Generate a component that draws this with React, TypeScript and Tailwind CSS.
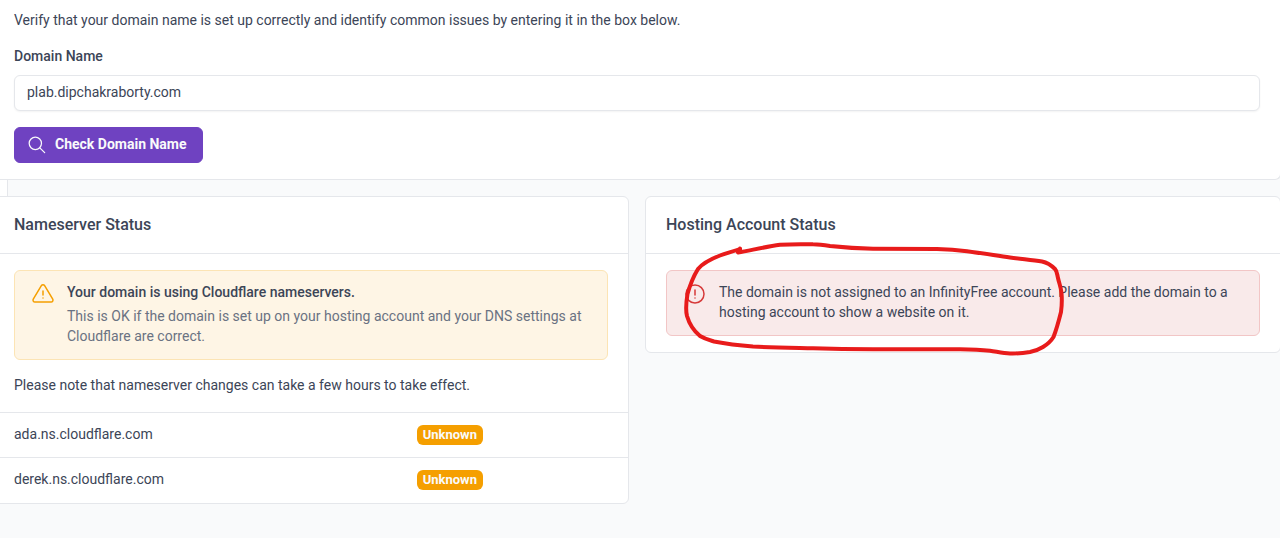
import type { ReactNode } from 'react';

const card = 'relative rounded-md border border-gray-200 bg-white';

function SearchIcon() {
  return (
    <svg viewBox="0 0 24 24" className="size-5" fill="none" stroke="currentColor" strokeWidth="1.5" strokeLinecap="round" aria-hidden="true">
      <circle cx="10" cy="10" r="7.4" />
      <path d="M21.2 21.2l-5.8-5.8" />
    </svg>
  );
}

function WarningIcon() {
  return (
    <svg viewBox="0 0 24 24" className="-mb-1 size-6 shrink-0 text-[#f59f00]" fill="none" stroke="currentColor" strokeWidth="1.5" strokeLinecap="round" strokeLinejoin="round" aria-hidden="true">
      <path d="M10.363 3.591l-8.106 13.534a1.914 1.914 0 0 0 1.636 2.871h16.214a1.914 1.914 0 0 0 1.636-2.87l-8.106-13.536a1.914 1.914 0 0 0-3.274 0z" />
      <path d="M12 9v4M12 16h.01" />
    </svg>
  );
}

function ErrorIcon() {
  return (
    <svg viewBox="0 0 24 24" className="-mb-1 size-6 shrink-0 text-[#d63939]" fill="none" stroke="currentColor" strokeWidth="1.5" strokeLinecap="round" aria-hidden="true">
      <circle cx="12" cy="12" r="9" />
      <path d="M12 8v5M12 16h.01" />
    </svg>
  );
}

function Scribble() {
  return (
    <svg
      viewBox="678 241 392 120"
      className="pointer-events-none absolute top-11 left-8 h-[120px] w-[392px]"
      fill="none"
      stroke="#e81b1b"
      strokeWidth="4"
      strokeLinecap="round"
      strokeLinejoin="round"
      aria-hidden="true"
    >
      <path d="M740 249C732 252 726 253 720 255.500C711 259 703 263 698 269C693 277 690 285 687.500 294C686 303 686 312 687 316C689 323 694 331 700 336C705 339 709 340 714 341.500C727 344 740 345.500 753 346.500C773 347.500 793 347.800 813 348.300C833 349 853 349.300 873 349.300H960C971 349.500 980 349.800 990 350.700C997 351.700 1003 353.200 1010 353.500C1017 353.700 1024 353 1030 352C1035 351 1039 349.500 1043 347C1048 344 1051 341 1053.500 337C1057 328 1059 320 1061 312C1062 305 1062 299 1061.500 293C1061 287 1059 283 1058 278C1057 274 1057 271 1055 269C1051 265 1047 262.500 1042 261.500C1032 260 1021 259 1010 257.500C996 255.500 981 253 967 251.200C957 250 947 249.300 937 249L873 248.700C859 248.500 844 247.500 830 246C824 245 819 244.300 813 244.300C802 244 791 244 780 244.800C765 247 752 250 738 252.500L740 248.500" />
    </svg>
  );
}

function CardTitle({ children }: { children: ReactNode }) {
  return (
    <header className="border-b border-gray-200 px-5 py-4">
      <h2 className="text-base font-medium">{children}</h2>
    </header>
  );
}

const nameservers = ['ada.ns.cloudflare.com', 'derek.ns.cloudflare.com'];

export default function App() {
  return (
    <div className="min-h-screen overflow-hidden bg-gray-50 font-['Roboto','Liberation_Sans',sans-serif] text-sm text-[#3c4557]">
      <main className="-mr-px -ml-[7px]">
        <section className="rounded-b-md border border-t-0 border-gray-200 bg-white px-5 pt-2.5 pb-4">
          <p>Verify that your domain name is set up correctly and identify common issues by entering it in the box below.</p>
          <form onSubmit={(e) => e.preventDefault()}>
            <label htmlFor="domain" className="mt-4 mb-[9px] block font-medium">
              Domain Name
            </label>
            <input
              id="domain"
              type="text"
              defaultValue="plab.dipchakraborty.com"
              className="block h-9 w-full rounded-md border border-gray-200 bg-white px-3 pb-0.5 shadow-xs outline-none"
            />
            <button type="submit" className="mt-4 flex h-9 items-center gap-2 rounded-md border border-[#6f42c1] bg-[#6f42c1] pr-[15px] pl-3 font-bold text-gray-50">
              <SearchIcon />
              <span className="pb-0.5">Check Domain Name</span>
            </button>
          </form>
        </section>

        <div className="h-4 w-[15px] border-r border-gray-200 bg-white" />

        <div className="grid grid-cols-2 items-start gap-4">
          <section className={card}>
            <CardTitle>Nameserver Status</CardTitle>
            <div className="px-5 pt-4 pb-[17px]">
              <div className="flex gap-3 rounded-md border border-[#fce4b4] bg-[#fef5e5] px-4 pt-[11px] pb-[13px]">
                <WarningIcon />
                <div>
                  <h3 className="mb-1 font-medium">Your domain is using Cloudflare nameservers.</h3>
                  <p className="text-gray-500">
                    This is OK if the domain is set up on your hosting account and your DNS settings at Cloudflare are correct.
                  </p>
                </div>
              </div>
              <p className="mt-[15px]">Please note that nameserver changes can take a few hours to take effect.</p>
            </div>
            <table className="w-full table-fixed text-left">
              <tbody>
                {nameservers.map((name) => (
                  <tr key={name} className="h-[45px] border-t border-gray-200">
                    <th scope="row" className="w-2/3 pb-0.5 pl-5 font-normal">{name}</th>
                    <td className="pb-0.5">
                      <span className="inline-block rounded-md bg-[#f59f00] px-1.5 align-middle text-[13px] leading-5 font-bold text-gray-50">Unknown</span>
                    </td>
                  </tr>
                ))}
              </tbody>
            </table>
          </section>

          <section className={card}>
            <CardTitle>Hosting Account Status</CardTitle>
            <div className="px-5 py-4">
              <div className="flex gap-3 rounded-md border border-[#f2c6c6] bg-[#f9eaea] px-4 pt-[11px] pb-[13px]">
                <ErrorIcon />
                <p>The domain is not assigned to an InfinityFree account. Please add the domain to a hosting account to show a website on it.</p>
              </div>
            </div>
            <Scribble />
          </section>
        </div>
      </main>
    </div>
  );
}
